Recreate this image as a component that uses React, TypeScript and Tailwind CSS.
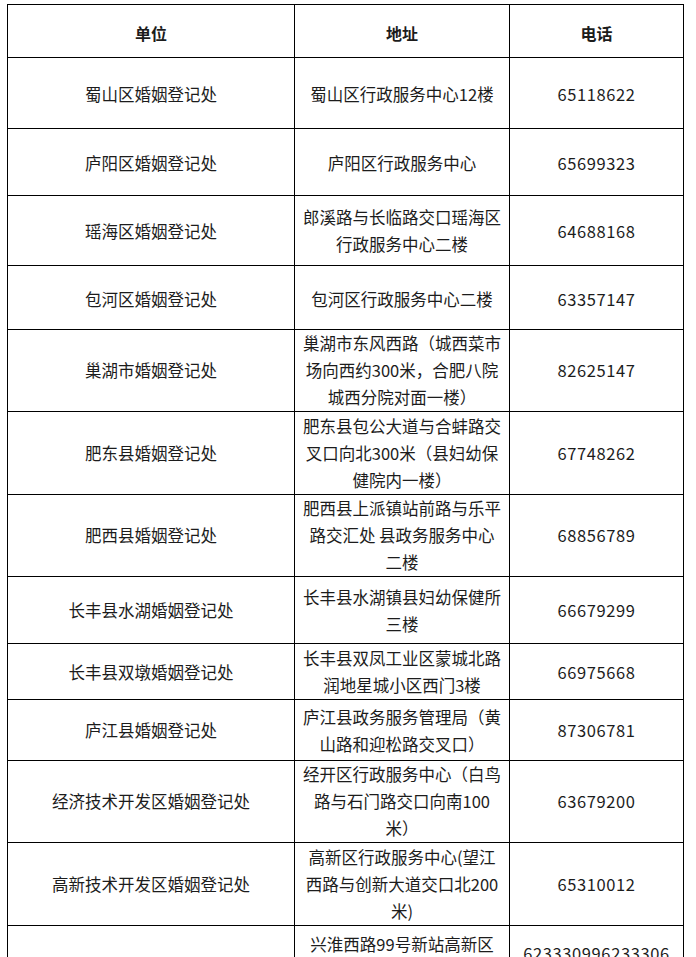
import React from "react";

interface Office {
  name: string;
  address: string[];
  phone: string[];
  height: string;
  phoneClass?: string;
}

const offices: Office[] = [
  { name: "蜀山区婚姻登记处", address: ["蜀山区行政服务中心12楼"], phone: ["65118622"], height: "h-[71px]" },
  { name: "庐阳区婚姻登记处", address: ["庐阳区行政服务中心"], phone: ["65699323"], height: "h-[67px]" },
  {
    name: "瑶海区婚姻登记处",
    address: ["郎溪路与长临路交口瑶海区", "行政服务中心二楼"],
    phone: ["64688168"],
    height: "h-[70px]",
  },
  { name: "包河区婚姻登记处", address: ["包河区行政服务中心二楼"], phone: ["63357147"], height: "h-[64px]" },
  {
    name: "巢湖市婚姻登记处",
    address: ["巢湖市东风西路（城西菜市", "场向西约300米，合肥八院", "城西分院对面一楼）"],
    phone: ["82625147"],
    height: "h-[82px]",
  },
  {
    name: "肥东县婚姻登记处",
    address: ["肥东县包公大道与合蚌路交", "叉口向北300米（县妇幼保", "健院内一楼）"],
    phone: ["67748262"],
    height: "h-[83px]",
  },
  {
    name: "肥西县婚姻登记处",
    address: ["肥西县上派镇站前路与乐平", "路交汇处 县政务服务中心", "二楼"],
    phone: ["68856789"],
    height: "h-[82px]",
  },
  {
    name: "长丰县水湖婚姻登记处",
    address: ["长丰县水湖镇县妇幼保健所", "三楼"],
    phone: ["66679299"],
    height: "h-[67px]",
  },
  {
    name: "长丰县双墩婚姻登记处",
    address: ["长丰县双凤工业区蒙城北路", "润地星城小区西门3楼"],
    phone: ["66975668"],
    height: "h-[56px]",
  },
  {
    name: "庐江县婚姻登记处",
    address: ["庐江县政务服务管理局（黄", "山路和迎松路交叉口）"],
    phone: ["87306781"],
    height: "h-[61px]",
  },
  {
    name: "经济技术开发区婚姻登记处",
    address: ["经开区行政服务中心（白鸟", "路与石门路交口向南100", "米）"],
    phone: ["63679200"],
    height: "h-[82px]",
  },
  {
    name: "高新技术开发区婚姻登记处",
    address: ["高新区行政服务中心(望江", "西路与创新大道交口北200", "米)"],
    phone: ["65310012"],
    height: "h-[83px]",
  },
  {
    name: "新站高新区婚姻登记处",
    address: ["兴淮西路99号新站高新区", "行政服务中心", "一楼"],
    phone: ["623330996233306", "62333099"],
    height: "h-[92px]",
    phoneClass: "pb-[10px]",
  },
];

function Lines({ lines }: { lines: string[] }) {
  return (
    <>
      {lines.map((line, i) => (
        <React.Fragment key={i}>
          {i > 0 && <br />}
          {line}
        </React.Fragment>
      ))}
    </>
  );
}

export default function App() {
  const cell = "border border-black text-center align-middle px-0";
  return (
    <div className="bg-white min-h-[957px] pt-[4px] pl-[7px] font-['Noto_Sans_CJK_SC',sans-serif] text-[#1c1c1c]">
      <table className="border-collapse table-fixed w-[676px]">
        <colgroup>
          <col className="w-[287px]" />
          <col className="w-[215px]" />
          <col className="w-[174px]" />
        </colgroup>
        <thead>
          <tr className="h-[53px] text-[16px] font-bold">
            <th className={`${cell} pt-[3px]`}>单位</th>
            <th className={`${cell} pt-[3px]`}>地址</th>
            <th className={`${cell} pt-[3px]`}>电话</th>
          </tr>
        </thead>
        <tbody className="text-[16.5px] leading-[27px]">
          {offices.map((office) => {
            const n = office.address.length;
            const pad = n === 1 ? "pt-[3px]" : n === 2 ? "pt-[1px]" : "py-0";
            return (
              <tr key={office.name} className={office.height}>
                <td className={`${cell} ${pad}`}>{office.name}</td>
                <td className={`${cell} ${pad}`}>
                  <Lines lines={office.address} />
                </td>
                <td className={`${cell} ${pad} tracking-[0.6px] ${office.phoneClass ?? ""}`}>
                  <Lines lines={office.phone} />
                </td>
              </tr>
            );
          })}
        </tbody>
      </table>
    </div>
  );
}
